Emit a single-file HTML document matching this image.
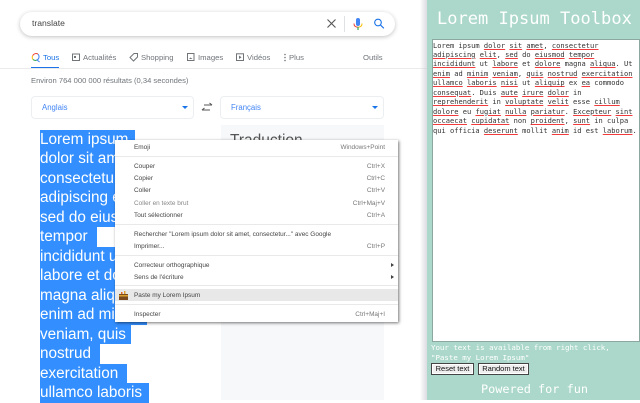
<!DOCTYPE html>
<html><head><meta charset="utf-8"><style>
html,body{margin:0;padding:0}
body{width:640px;height:400px;overflow:hidden;background:#fff;position:relative;font-family:"Liberation Sans",sans-serif;filter:blur(.25px)}
.a{position:absolute;white-space:pre}
.nav{font-size:7.7px;color:#70757a;top:52px;line-height:11px}
.sel{position:absolute;left:40px;background:#338fff;height:19.5px}
.t{position:absolute;left:40px;color:#fff;font-size:15.3px;line-height:19.5px;white-space:pre}
.m{position:absolute;left:134px;font-size:6.45px;line-height:10px;color:#444;white-space:pre}
.k{position:absolute;right:255px;font-size:6.45px;line-height:10px;color:#777;white-space:pre}
.hr{position:absolute;left:115px;width:283px;height:1px;background:#e9e9e9}
.mono{font-family:"DejaVu Sans Mono",monospace}
.l{position:absolute;left:433px;font-family:"DejaVu Sans Mono",monospace;font-size:7.05px;line-height:9.45px;color:#333;white-space:pre}
.l u{text-decoration:underline solid #f03c3c;text-decoration-thickness:1px;text-underline-offset:1px}
.btn{position:absolute;top:362.500px;height:12px;background:#efefef;border:1px solid #444;box-sizing:border-box;font-size:7.5px;line-height:10px;text-align:center;color:#111;box-shadow:inset 0 0 0 1px #fff}
</style></head><body>
<div class="a" style="left:20px;top:12px;width:375px;height:24px;border-radius:12px;box-shadow:0 1px 4px rgba(32,33,36,.28)"></div>
<div class="a" style="left:32px;top:17px;font-size:8.6px;line-height:13px;color:#444">translate</div>
<svg class="a" style="left:326px;top:18px" width="12" height="12"><path d="M1.5 1.5L9.5 9.5M9.5 1.5L1.5 9.5" stroke="#555" stroke-width="1.1" fill="none"/></svg>
<div class="a" style="left:344px;top:16px;width:1px;height:16px;background:#dfe1e5"></div>
<svg class="a" style="left:352px;top:17px" width="12" height="14"><rect x="4" y="1" width="4" height="8" rx="2" fill="#4285f4"/><path d="M2 6.5C2 9 3.5 10.2 6 10.2" stroke="#ea4335" fill="none"/><path d="M10 6.5C10 9 8.5 10.2 6 10.2" stroke="#fbbc05" fill="none"/><path d="M6 10v3" stroke="#34a853" stroke-width="1.2"/></svg>
<svg class="a" style="left:373px;top:17px" width="12" height="13"><circle cx="5" cy="5.5" r="3.3" stroke="#1a73e8" stroke-width="1.1" fill="none"/><path d="M7.5 8L10.8 11.3" stroke="#1a73e8" stroke-width="1.2"/></svg>

<svg class="a" style="left:31px;top:52px" width="10" height="11"><path d="M7 2.2A3.6 3.6 0 0 0 1.7 3.6" stroke="#ea4335" fill="none"/><path d="M1.7 3.6A3.6 3.6 0 0 0 1.9 7.4" stroke="#fbbc05" fill="none"/><path d="M1.9 7.4A3.6 3.6 0 0 0 6 8" stroke="#34a853" fill="none"/><path d="M7 2.2A3.6 3.6 0 0 1 6 8L8.6 10" stroke="#4285f4" fill="none"/></svg>
<div class="a nav" style="left:43px;color:#1a73e8">Tous</div>
<div class="a" style="left:31px;top:67px;width:28px;height:2px;background:#1a73e8"></div>
<svg class="a" style="left:72px;top:53px" width="9" height="9"><rect x=".5" y="1" width="7" height="6.5" fill="none" stroke="#70757a"/><rect x="2" y="3" width="2" height="2" fill="#70757a"/></svg>
<div class="a nav" style="left:83px">Actualités</div>
<svg class="a" style="left:129px;top:52px" width="10" height="10"><path d="M1 5.5L5 1.5H8.5V5L4.5 9Z" fill="none" stroke="#70757a"/></svg>
<div class="a nav" style="left:141px">Shopping</div>
<svg class="a" style="left:187px;top:53px" width="9" height="9"><rect x=".5" y=".5" width="6.5" height="7" fill="none" stroke="#70757a"/><path d="M2 6L3.5 4.5L5.5 6Z" fill="#70757a"/></svg>
<div class="a nav" style="left:198px">Images</div>
<svg class="a" style="left:236px;top:53px" width="9" height="9"><rect x=".5" y=".8" width="7" height="6.7" fill="none" stroke="#70757a"/><path d="M3 2.5V6L5.6 4.2Z" fill="#70757a"/></svg>
<div class="a nav" style="left:247px">Vidéos</div>
<svg class="a" style="left:283px;top:53px" width="4" height="9"><circle cx="2" cy="1.5" r=".8" fill="#70757a"/><circle cx="2" cy="4.5" r=".8" fill="#70757a"/><circle cx="2" cy="7.5" r=".8" fill="#70757a"/></svg>
<div class="a nav" style="left:289px">Plus</div>
<div class="a nav" style="left:363px">Outils</div>
<div class="a" style="left:0;top:68px;width:427px;height:1px;background:#ebebeb"></div>
<div class="a" style="left:31px;top:75px;font-size:7.6px;line-height:11px;color:#70757a">Environ 764 000 000 résultats (0,34 secondes)</div>

<div class="a" style="left:31px;top:96px;width:163px;height:23px;border:1px solid #eceff1;border-radius:4px;box-sizing:border-box"></div>
<div class="a" style="left:42px;top:101.500px;font-size:7.8px;line-height:12px;color:#4285f4">Anglais</div>
<div class="a" style="left:182px;top:106px;border:3px solid transparent;border-top:3.5px solid #1a73e8;border-bottom:0"></div>
<svg class="a" style="left:201px;top:100px" width="12" height="14"><path d="M1 10H9M1 10L3.5 8M11 5H3M11 5L8.5 3" stroke="#555" stroke-width="1.1" fill="none"/></svg>
<div class="a" style="left:220px;top:96px;width:164px;height:23px;border:1px solid #eceff1;border-radius:4px;box-sizing:border-box"></div>
<div class="a" style="left:231px;top:101.500px;font-size:7.8px;line-height:12px;color:#4285f4">Français</div>
<div class="a" style="left:372px;top:106px;border:3px solid transparent;border-top:3.5px solid #1a73e8;border-bottom:0"></div>

<div class="a" style="left:221px;top:125px;width:163px;height:275px;background:#f6f8fa"></div>
<div class="a" style="left:230px;top:131px;font-size:15.5px;line-height:19px;color:#555">Traduction</div>

<div class="sel" style="top:129.5px;width:95px"></div><div class="t" style="top:129.5px">Lorem ipsum</div>
<div class="sel" style="top:149px;width:95px"></div><div class="t" style="top:149px">dolor sit amet,</div>
<div class="sel" style="top:168.500px;width:95px"></div><div class="t" style="top:168.500px">consectetur</div>
<div class="sel" style="top:188px;width:95px"></div><div class="t" style="top:188px">adipiscing elit,</div>
<div class="sel" style="top:207.500px;width:95px"></div><div class="t" style="top:207.500px">sed do eiusmod</div>
<div class="sel" style="top:227px;width:57px"></div><div class="t" style="top:227px">tempor</div>
<div class="sel" style="top:246.500px;width:95px"></div><div class="t" style="top:246.500px">incididunt ut</div>
<div class="sel" style="top:266px;width:95px"></div><div class="t" style="top:266px">labore et dolore</div>
<div class="sel" style="top:285.500px;width:95px"></div><div class="t" style="top:285.500px">magna aliqua.</div>
<div class="sel" style="top:305px;width:107px"></div><div class="t" style="top:305px">enim ad minim</div>
<div class="sel" style="top:324.500px;width:91px"></div><div class="t" style="top:324.500px">veniam, quis</div>
<div class="sel" style="top:344px;width:60px"></div><div class="t" style="top:344px">nostrud</div>
<div class="sel" style="top:363.500px;width:87px"></div><div class="t" style="top:363.500px">exercitation</div>
<div class="sel" style="top:383px;width:109px"></div><div class="t" style="top:382.500px">ullamco laboris</div>

<div class="a" style="left:115px;top:139.500px;width:283px;height:182.500px;background:#fff;box-shadow:1px 1px 3px rgba(0,0,0,.55)"></div>
<div class="m" style="top:143px">Emoji</div><div class="k" style="top:143px">Windows+Point</div>
<div class="hr" style="top:156px"></div>
<div class="m" style="top:161.500px">Couper</div><div class="k" style="top:161.500px">Ctrl+X</div>
<div class="m" style="top:174px">Copier</div><div class="k" style="top:174px">Ctrl+C</div>
<div class="m" style="top:186px">Coller</div><div class="k" style="top:186px">Ctrl+V</div>
<div class="m" style="top:198.500px;color:#888">Coller en texte brut</div><div class="k" style="top:198.500px">Ctrl+Maj+V</div>
<div class="m" style="top:211px">Tout sélectionner</div><div class="k" style="top:211px">Ctrl+A</div>
<div class="hr" style="top:224px"></div>
<div class="m" style="top:229.500px">Rechercher "Lorem ipsum dolor sit amet, consectetur..." avec Google</div>
<div class="m" style="top:242px">Imprimer...</div><div class="k" style="top:242px">Ctrl+P</div>
<div class="hr" style="top:255px"></div>
<div class="m" style="top:260.500px">Correcteur orthographique</div>
<div class="a" style="left:391px;top:262.500px;border:2.500px solid transparent;border-left:3px solid #444;border-right:0"></div>
<div class="m" style="top:272.500px">Sens de l'écriture</div>
<div class="a" style="left:391px;top:274.500px;border:2.500px solid transparent;border-left:3px solid #444;border-right:0"></div>
<div class="hr" style="top:285px"></div>
<div class="a" style="left:115px;top:289px;width:283px;height:12px;background:#e8e8e8"></div>
<svg class="a" style="left:119px;top:291px" width="10" height="9"><rect x="0" y="3" width="9" height="6" fill="#7a4a1e"/><rect x="0" y="4" width="9" height="1.500" fill="#d9a030"/><rect x="2" y="1" width="1.500" height="2" fill="#e06a20"/><rect x="5" y="0" width="1.500" height="3" fill="#e0a030"/></svg>
<div class="m" style="top:291px">Paste my Lorem Ipsum</div>
<div class="hr" style="top:304px"></div>
<div class="m" style="top:309.500px">Inspecter</div><div class="k" style="top:309.500px">Ctrl+Maj+I</div>

<div class="a" style="left:420px;top:0;width:7px;height:400px;background:linear-gradient(90deg,rgba(200,200,210,0),rgba(190,190,200,.55))"></div>
<div class="a" style="left:427px;top:0;width:213px;height:400px;background:#abd8ca"></div>
<div class="a mono" style="left:437px;top:8px;font-size:17.05px;line-height:22px;color:#fff">Lorem Ipsum Toolbox</div>
<div class="a" style="left:431.500px;top:38.500px;width:208.500px;height:303.500px;background:#fff;border:1px solid #8aa89f;box-sizing:border-box"></div>
<div class="l" style="top:40.500px">Lorem ipsum <u>dolor</u> <u>sit</u> <u>amet</u>, <u>consectetur</u>
<u>adipiscing</u> <u>elit</u>, <u>sed</u> do <u>eiusmod</u> <u>tempor</u>
<u>incididunt</u> ut <u>labore</u> et <u>dolore</u> magna <u>aliqua</u>. Ut
<u>enim</u> ad <u>minim</u> <u>veniam</u>, <u>quis</u> <u>nostrud</u> <u>exercitation</u>
<u>ullamco</u> <u>laboris</u> <u>nisi</u> ut <u>aliquip</u> ex <u>ea</u> commodo
<u>consequat</u>. Duis <u>aute</u> <u>irure</u> <u>dolor</u> in
<u>reprehenderit</u> in <u>voluptate</u> <u>velit</u> esse <u>cillum</u>
<u>dolore</u> eu <u>fugiat</u> <u>nulla</u> <u>pariatur</u>. <u>Excepteur</u> <u>sint</u>
<u>occaecat</u> <u>cupidatat</u> non <u>proident</u>, <u>sunt</u> in culpa
qui officia <u>deserunt</u> mollit <u>anim</u> id est <u>laborum</u>.</div>
<div class="a mono" style="left:431px;top:343px;font-size:7.43px;line-height:10px;color:#fff">Your text is available from right click,
"Paste my Lorem Ipsum"</div>
<div class="btn" style="left:431px;width:43px">Reset text</div>
<div class="btn" style="left:478px;width:51px">Random text</div>
<div class="a mono" style="left:481px;top:382px;font-size:11.85px;line-height:15px;color:#fff">Powered for fun</div>
</body></html>
